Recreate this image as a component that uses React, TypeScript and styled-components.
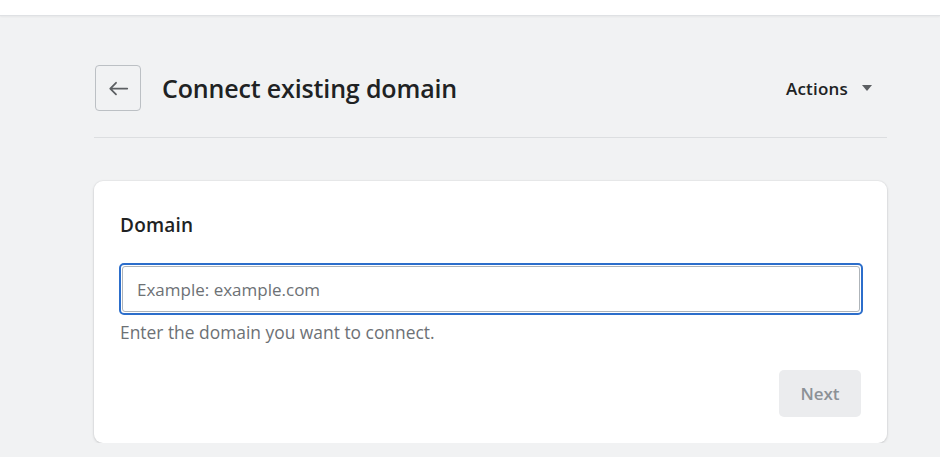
import styled, { createGlobalStyle } from "styled-components";

const GlobalStyle = createGlobalStyle`
  html, body {
    margin: 0;
    padding: 0;
    background: #f1f2f3;
    font-family: "Open Sans", "Noto Sans", sans-serif;
    color: #202223;
  }
  * {
    box-sizing: border-box;
  }
`;

const TopBar = styled.div`
  height: 16px;
  background: #fff;
  border-bottom: 1px solid #dfe1e4;
  box-shadow: 0 1px 2px rgba(0, 0, 0, 0.05);
`;

const Page = styled.main`
  width: 793px;
  margin: 0 0 0 94px;
  padding-top: 49px;
`;

const Header = styled.header`
  display: flex;
  align-items: center;
  padding-bottom: 26px;
  border-bottom: 1px solid #dcdee0;
`;

const BackButton = styled.button`
  width: 46px;
  height: 46px;
  margin-left: 1px;
  display: flex;
  align-items: center;
  justify-content: center;
  border: 1px solid #bcc0c4;
  border-radius: 4px;
  background: transparent;
  padding: 0;
  cursor: pointer;
`;

const Title = styled.h1`
  margin: 0 0 0 21px;
  font-size: 25px;
  font-weight: 600;
  letter-spacing: -0.15px;
  flex: 1;
`;

const ActionsButton = styled.button`
  display: flex;
  align-items: center;
  gap: 14px;
  margin-right: 15px;
  border: none;
  background: none;
  font-family: inherit;
  font-size: 17px;
  font-weight: 600;
  color: #202223;
  padding: 0;
  letter-spacing: 0.2px;
`;

const Caret = styled.span`
  width: 0;
  height: 0;
  border-left: 5px solid transparent;
  border-right: 5px solid transparent;
  border-top: 6px solid #5c5f62;
`;

const Card = styled.section`
  margin-top: 43px;
  background: #fff;
  border-radius: 9px;
  box-shadow: 0 0 0 1px rgba(63, 63, 68, 0.03), 0 1px 3px rgba(63, 63, 68, 0.18);
  padding: 31px 24px 26px 26px;
`;

const CardTitle = styled.h2`
  margin: 0 0 25px;
  font-size: 19px;
  font-weight: 600;
  letter-spacing: 0.2px;
`;

const InputWrap = styled.div`
  height: 52px;
  border: 2px solid #2c6ecb;
  border-radius: 5px;
  padding: 1px;
  margin-left: -1px;
`;

const Input = styled.input`
  width: 100%;
  height: 100%;
  border: 1px solid #aeb4b9;
  border-radius: 3px;
  padding: 0 14px;
  font-family: inherit;
  font-size: 17px;
  color: #202223;
  outline: none;
  &::placeholder {
    color: #6d7175;
  }
`;

const HelpText = styled.p`
  margin: 5px 0 0;
  font-size: 17.4px;
  color: #6d7175;
`;

const Footer = styled.div`
  display: flex;
  justify-content: flex-end;
  margin-top: 26px;
`;

const NextButton = styled.button`
  width: 82px;
  height: 47px;
  margin-right: 2px;
  border: none;
  border-radius: 5px;
  background: #ebecee;
  color: #8c9196;
  font-family: inherit;
  font-size: 17px;
  font-weight: 600;
`;

const App = () => {
  return (
    <>
      <GlobalStyle />
      <TopBar />
      <Page>
        <Header>
          <BackButton aria-label="Back">
            <svg width="25" height="25" viewBox="0 0 20 20">
              <path
                d="M17 9.3H5.1l3.4-3.4a.7.7 0 1 0-1-1l-4.6 4.6a.7.7 0 0 0 0 1l4.6 4.6a.7.7 0 0 0 1-1L5.1 10.7H17a.7.7 0 1 0 0-1.4z"
                fill="#5c5f62"
              />
            </svg>
          </BackButton>
          <Title>Connect existing domain</Title>
          <ActionsButton>
            Actions
            <Caret />
          </ActionsButton>
        </Header>
        <Card>
          <CardTitle>Domain</CardTitle>
          <InputWrap>
            <Input placeholder="Example: example.com" />
          </InputWrap>
          <HelpText>Enter the domain you want to connect.</HelpText>
          <Footer>
            <NextButton disabled>Next</NextButton>
          </Footer>
        </Card>
      </Page>
    </>
  );
};

export default App;
